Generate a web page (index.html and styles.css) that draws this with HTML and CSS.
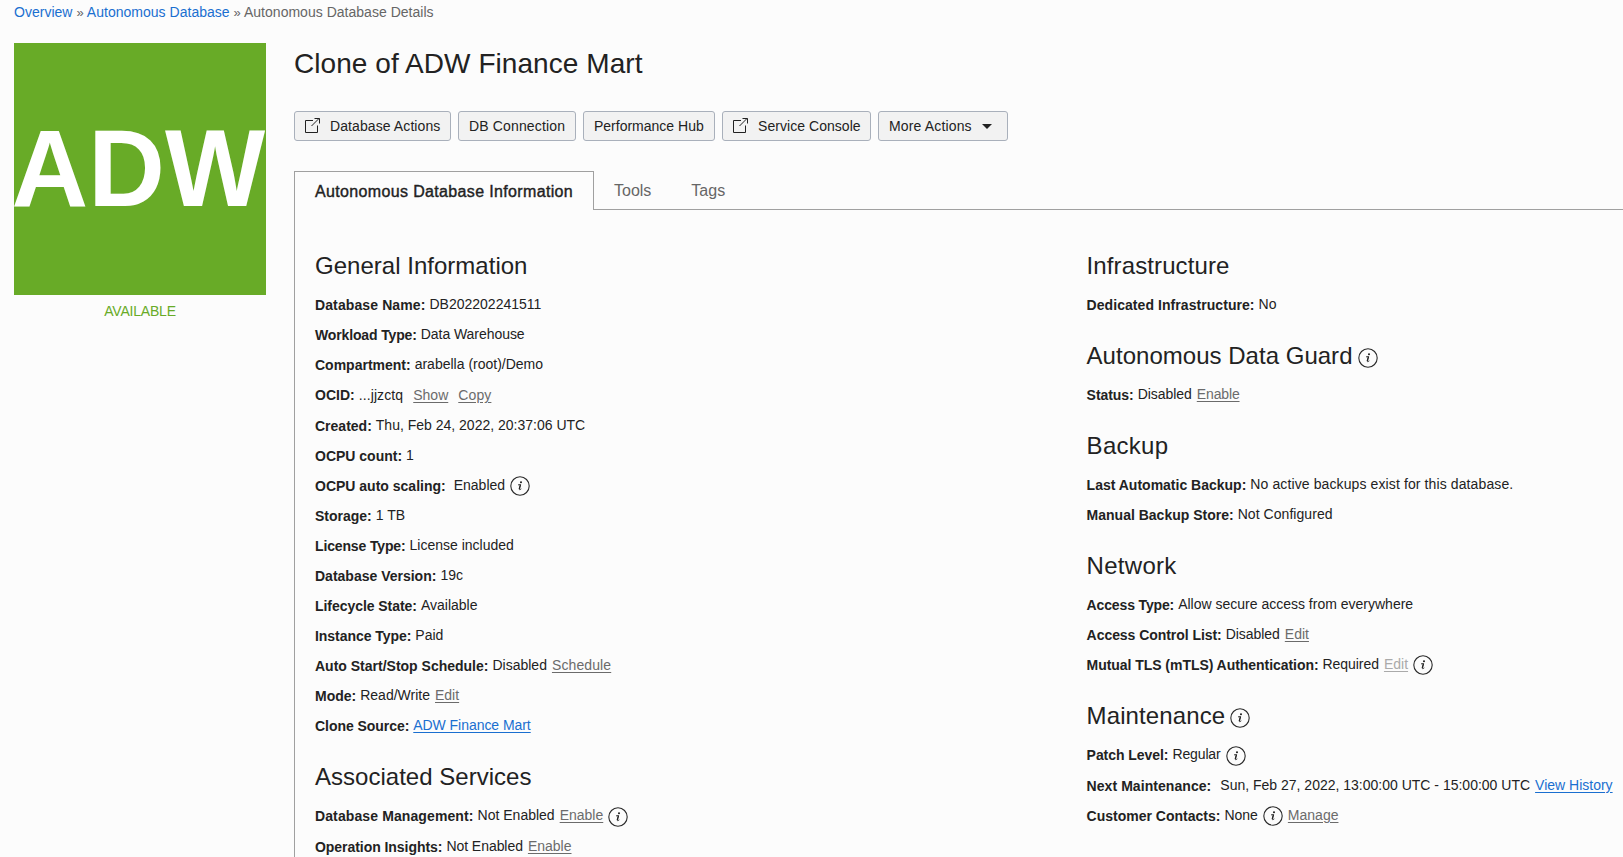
FILE: index.html
```
<!DOCTYPE html>
<html lang="en">
<head>
<meta charset="utf-8">
<title>Autonomous Database Details</title>
<link rel="stylesheet" href="styles.css">
</head>
<body>
<svg width="0" height="0" class="defs">
  <symbol id="info" viewBox="0 0 20 20">
    <circle cx="10" cy="10" r="9.2" fill="none" stroke="#2b2b2b" stroke-width="1.1"/>
    <circle cx="11" cy="6.2" r="1.05" fill="#222"/>
    <path d="M8 8.9 L10.6 8.5 L9.3 13.2 Q9.1 14.4 11.3 12.8" fill="none" stroke="#222" stroke-width=".9"/>
    <path d="M10.4 8.8 L9.2 13.2" stroke="#222" stroke-width="1.2"/>
  </symbol>
  <symbol id="launch" viewBox="0 0 16 16">
    <path d="M9 3.5 H1.5 V15.5 H13.5 V8.5" fill="none" stroke="#222" stroke-width="1"/>
    <path d="M7.5 9 L15 1.5 M10.5 1.5 H15.5 V6.5" fill="none" stroke="#222" stroke-width="1"/>
  </symbol>
</svg>
<nav class="crumbs"><a>Overview</a> <span class="sep">»</span> <a>Autonomous Database</a> <span class="sep">»</span> Autonomous Database Details</nav>
<div class="page">
  <aside class="side">
    <div class="badge"><span>ADW</span></div>
    <div class="state">AVAILABLE</div>
  </aside>
  <main class="main">
    <h1>Clone of ADW Finance Mart</h1>
    <div class="actions">
      <button class="btn b1"><svg class="launch"><use href="#launch"/></svg>Database Actions</button>
      <button class="btn b2">DB Connection</button>
      <button class="btn b3">Performance Hub</button>
      <button class="btn b4"><svg class="launch"><use href="#launch"/></svg>Service Console</button>
      <button class="btn b5">More Actions<i class="caret"></i></button>
    </div>
    <div class="tabs">
      <div class="tab active">Autonomous Database Information</div>
      <div class="rest"><div class="tab">Tools</div><div class="tab">Tags</div></div>
    </div>
    <div class="panel">
      <section class="col left">
        <h2>General Information</h2>
        <div class="row"><b class="wide">Database Name:</b><span>DB202202241511</span></div>
        <div class="row"><b class="tight">Workload Type:</b><span class="snug">Data Warehouse</span></div>
        <div class="row"><b>Compartment:</b><span>arabella (root)/Demo</span></div>
        <div class="row tall level"><b>OCID:</b><span class="wide">...jjzctq</span><a class="far">Show</a><a class="far wide">Copy</a></div>
        <div class="row"><b>Created:</b><span>Thu, Feb 24, 2022, 20:37:06 UTC</span></div>
        <div class="row"><b>OCPU count:</b><span>1</span></div>
        <div class="row"><b>OCPU auto scaling:</b><span class="far near">Enabled</span><svg class="info"><use href="#info"/></svg></div>
        <div class="row"><b>Storage:</b><span>1 TB</span></div>
        <div class="row"><b class="tight">License Type:</b><span>License included</span></div>
        <div class="row"><b>Database Version:</b><span>19c</span></div>
        <div class="row"><b class="snug">Lifecycle State:</b><span>Available</span></div>
        <div class="row"><b class="snug">Instance Type:</b><span>Paid</span></div>
        <div class="row"><b>Auto Start/Stop Schedule:</b><span>Disabled</span><a class="wide">Schedule</a></div>
        <div class="row"><b>Mode:</b><span>Read/Write</span><a>Edit</a></div>
        <div class="row"><b class="snug">Clone Source:</b><a class="blue first snug">ADW Finance Mart</a></div>
        <h2>Associated Services</h2>
        <div class="row tall"><b class="wide">Database Management:</b><span>Not Enabled</span><a>Enable</a><svg class="info low"><use href="#info"/></svg></div>
        <div class="row"><b class="snug">Operation Insights:</b><span class="snug">Not Enabled</span><a>Enable</a></div>
      </section>
      <section class="col right">
        <h2 class="wide">Infrastructure</h2>
        <div class="row"><b class="loose">Dedicated Infrastructure:</b><span>No</span></div>
        <h2>Autonomous Data Guard<svg class="info"><use href="#info"/></svg></h2>
        <div class="row"><b class="snug">Status:</b><span class="snug">Disabled</span><a class="tight">Enable</a></div>
        <h2 class="wider">Backup</h2>
        <div class="row"><b>Last Automatic Backup:</b><span class="wide">No active backups exist for this database.</span></div>
        <div class="row"><b>Manual Backup Store:</b><span class="loose">Not Configured</span></div>
        <h2 class="wider">Network</h2>
        <div class="row"><b class="tight">Access Type:</b><span>Allow secure access from everywhere</span></div>
        <div class="row"><b class="snug">Access Control List:</b><span class="snug">Disabled</span><a>Edit</a></div>
        <div class="row"><b class="snug">Mutual TLS (mTLS) Authentication:</b><span class="snug">Required</span><a class="dim">Edit</a><svg class="info"><use href="#info"/></svg></div>
        <h2 class="wide">Maintenance<svg class="info"><use href="#info"/></svg></h2>
        <div class="row tall"><b class="snug">Patch Level:</b><span class="tight">Regular</span><svg class="info low"><use href="#info"/></svg></div>
        <div class="row"><b class="loose">Next Maintenance:</b><span class="far">Sun, Feb 27, 2022, 13:00:00 UTC - 15:00:00 UTC</span><a class="blue">View History</a></div>
        <div class="row"><b>Customer Contacts:</b><span>None</span><svg class="info"><use href="#info"/></svg><a>Manage</a></div>
      </section>
    </div>
  </main>
</div>
</body>
</html>
```
FILE: styles.css
```
* { box-sizing: border-box; }
html, body { height: 100%; }
body {
  margin: 0;
  overflow: hidden;
  background: #fcfcfc;
  color: #222;
  font: 14px/20px "Liberation Sans", Arial, sans-serif;
}
.defs { display: block; height: 0; }
.crumbs { height: 43px; padding: 2px 14px 0; color: #666; white-space: nowrap; letter-spacing: .02px; }
.crumbs a { color: #1a6fd0; }
.sep { font-size: 13px; }
.page { display: flex; gap: 28px; height: 814px; padding-left: 14px; }
.side { flex: none; width: 252px; }
.badge {
  display: flex; align-items: center; justify-content: center;
  height: 252px; padding-bottom: 2px; background: #68ab27; color: #fff;
}
.badge span { font-size: 110px; line-height: 110px; font-weight: bold; font-kerning: none; transform: translateX(-2px) scaleX(.965); }
.state { padding-top: 6px; text-align: center; color: #68ab27; letter-spacing: -.2px; }
.main { flex: 1; min-width: 0; display: flex; flex-direction: column; }
h1 { margin: 0; height: 68px; font-size: 28px; line-height: 42px; font-weight: normal; letter-spacing: .06px; white-space: nowrap; }
.actions { display: flex; gap: 7px; height: 60px; }
.btn {
  display: flex; align-items: center; height: 30px; padding: 0 10px;
  border: 1px solid #a9b0bb; border-radius: 3px; background: #f2f2f2; color: #222;
  font: inherit; letter-spacing: .09px; white-space: nowrap;
}
.b1 { width: 157px; }
.b2 { width: 118px; letter-spacing: .15px; }
.b3 { width: 132px; letter-spacing: 0; }
.b4 { width: 149px; letter-spacing: .05px; }
.b5 { width: 130px; letter-spacing: .15px; }
.launch { flex: none; width: 16px; height: 16px; margin: 0 10px 3px -1px; }
.caret { margin-left: 10px; border: 5px solid transparent; border-top-color: #222; border-bottom: 0; }
.tabs { display: flex; height: 39px; flex: none; font-size: 16px; }
.tab.active {
  width: 300px; padding: 10px 20px; border: 1px solid #a0a0a0; border-bottom: 0;
  -webkit-text-stroke: .4px #222; letter-spacing: .35px; white-space: nowrap;
}
.rest { flex: 1; display: flex; gap: 40px; padding: 10px 20px 0; border-bottom: 1px solid #a0a0a0; color: #666; }
.panel { flex: 1; min-height: 0; display: flex; padding: 20px 0 0 20px; border-left: 1px solid #a0a0a0; overflow: hidden; }
.col { white-space: nowrap; }
.left { flex: none; width: 771.6px; }
h2 { display: flex; margin: 0; height: 60px; padding-top: 21px; font-size: 24px; line-height: 30px; font-weight: normal; letter-spacing: .02px; }
h2 .info { margin: 7px 0 0 5px; }
.row { display: flex; align-items: center; height: 30px; }
.row.tall { height: 31px; padding-bottom: 1px; }
.row span, .row a { margin: 0 0 2px 4px; }
.row.level span, .row.level a { margin-bottom: 0; }
.row a { margin-left: 5px; color: #6b6b6b; text-decoration: underline; text-underline-offset: 2px; }
.row span.far { margin-left: 9px; }
.row span.near { margin-left: 8px; }
.row a.far { margin-left: 10px; }
.row a.blue { color: #1a6fd0; }
.row a.first { margin-left: 4px; }
.row a.dim { color: #aaa; }
.wide { letter-spacing: .11px; }
.wider { letter-spacing: .28px; }
.loose { letter-spacing: .06px; }
.snug { letter-spacing: -.05px; }
.tight { letter-spacing: -.14px; }
.info { flex: none; width: 20px; height: 20px; margin-left: 5px; }
.low { margin-top: 2px; }
```
